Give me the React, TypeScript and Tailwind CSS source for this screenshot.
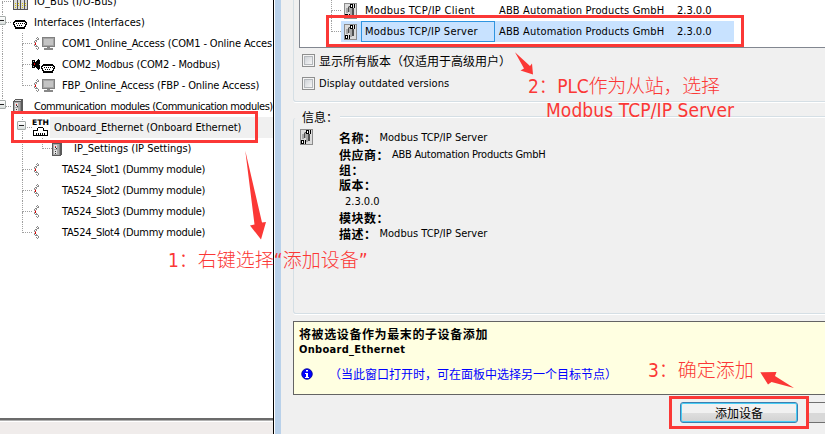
import type { ReactNode } from "react";
import { clsx } from "clsx";

const tahoma = "font-['DejaVu_Sans_Condensed','DejaVu_Sans','Noto_Sans_CJK_SC',sans-serif]";
const song = "font-['Noto_Sans_CJK_SC',sans-serif]";

function Elbow({ wide, last }: { wide: string; last?: boolean }) {
  return (
    <span className={clsx("flex shrink-0 flex-col", wide)}>
      <i className="h-[11px] border-b border-l border-dotted border-[#a0a0a0]" />
      <i className={clsx("h-[10px]", !last && "border-l border-dotted border-[#a0a0a0]")} />
    </span>
  );
}

function Toggle({ place }: { place: string }) {
  return (
    <span className={clsx("absolute flex size-[9px] items-center justify-center rounded-[1px] border border-[#a4aaa8] bg-gradient-to-b from-white to-[#d8dedc]", place)}>
      <i className="h-px w-[5px] bg-[#222]" />
    </span>
  );
}

function Port() {
  return (
    <svg width="14" height="9" viewBox="0 0 14 9" shapeRendering="crispEdges">
      <path d="M2 0h10v1h1v1h1v3h-1v2h-1v2H2V7H1V5H0V2h1V1h1z" fill="#000" />
      <path d="M2 2h10v1h1v1h-1v2h-1v1H3V6H2V4H1V3h1z" fill="#fff" />
      <path d="M3 3h1v1H3zM5 3h1v1H5zM7 3h1v1H7zM9 3h1v1H9zM11 3h1v1h-1zM4 5h1v1H4zM6 5h1v1H6zM8 5h1v1H8z" fill="#000" />
    </svg>
  );
}

function Link() {
  return (
    <svg className="shrink-0" width="6" height="13" viewBox="0 0 6 13" shapeRendering="crispEdges">
      <path d="M3 0h1v1H3zM4 1h1v1H4zM2 1h1v1H2zM3 2h2v1H3zM1 3h2v1H1zM0 4h1v1H0zM2 4h1v1H2zM0 8h1v1H0zM2 8h1v1H2zM1 9h2v1H1zM3 9h1v1H3zM2 11h1v1H2zM4 11h1v1H4zM3 12h1v1H3zM4 10h1v1H4z" fill="#8a8a8a" />
      <path d="M0 5h1v1H0zM0 7h1v1H0z" fill="#999" />
      <path d="M1 5h1v1H1z" fill="#c77" />
      <path d="M1 6h1v2H1z" fill="#d00" />
    </svg>
  );
}

function Monitor() {
  return (
    <svg className="shrink-0" width="13" height="13" viewBox="0 0 13 13" shapeRendering="crispEdges">
      <path d="M0 0h13v10H0z" fill="#808080" />
      <path d="M1 1h11v8H1z" fill="#a5a5a5" />
      <path d="M2 2h9v6H2z" fill="#c4c4c4" />
      <path d="M5 10h3v1H5zM2 11h9v2H2z" fill="#888" />
    </svg>
  );
}

function Plug() {
  return (
    <svg className="shrink-0" width="8" height="11" viewBox="0 0 8 11" shapeRendering="crispEdges">
      <path d="M0 1h3v8H0zM3 3h1v5H3zM4 2h1v7H4zM5 1h1v9H5zM6 0h1v11H6zM7 1h1v9H7z" fill="#000" />
      <path d="M1 2h1v1H1zM1 7h1v1H1zM7 5h1v1H7z" fill="#bbb" />
      <path d="M2 4h1v2H2z" fill="#e00" />
    </svg>
  );
}

function Rack() {
  return (
    <svg className="shrink-0" width="10" height="15" viewBox="0 0 10 15" shapeRendering="crispEdges">
      <path d="M0 2l2-2h8v13l-2 2H0z" fill="#5a5a5a" />
      <path d="M1 3h6v11H1z" fill="#aaa" />
      <path d="M2 1h6l-1 1H1z" fill="#ddd" />
      <path d="M7 3h1v11H7z" fill="#888" />
      <path d="M2 4h3v4H2zM2 9h3v4H2z" fill="#e4e4e4" />
      <path d="M3 6h1v1H3zM4 7h1v1H4zM3 10h1v1H3zM3 12h1v1H3z" fill="#333" />
      <path d="M3 5h1v1H3z" fill="#d22" />
    </svg>
  );
}

function Card() {
  return (
    <svg width="13" height="16" viewBox="0 0 13 16" shapeRendering="crispEdges">
      <path d="M0 0h13v16H0z" fill="#8c8c8c" />
      <path d="M1 1h11v14H1z" fill="#dcdcdc" />
      <path d="M2 5h2v5H2zM4 3h2v6H4zM6 5h2v8H6z" fill="#a8a8a8" />
      <path d="M4 4h1v5H4zM8 5h2v7H8zM5 3h2v1H5z" fill="#505050" />
      <path d="M6 1h3v1H6zM6 2h1v2H6zM8 2h1v2H8zM6 4h3v1H6zM10 1h1v4h-1zM1 11h3v1H1zM1 12h1v2H1zM3 12h1v2H3zM1 14h3v1H1zM5 11h1v4H5z" fill="#000" />
      <path d="M7 2h1v2H7zM2 12h1v2H2z" fill="#fff" />
    </svg>
  );
}

function Ethernet() {
  return (
    <svg className="shrink-0" width="18" height="18" viewBox="0 0 18 18" shapeRendering="crispEdges">
      <text x="0" y="6" fontSize="7.5" fontWeight="700" textLength="17" lengthAdjust="spacingAndGlyphs" fontFamily="DejaVu Sans">ETH</text>
      <path d="M6 8h5v1H6zM5 9h1v2H5zM11 9h1v2h-1zM2 11h4v1H2zM11 11h4v1h-4zM1 11h1v6H1zM15 11h1v6h-1zM1 16h15v1H1z" fill="#000" />
      <path d="M4 14h1v2H4zM6 14h1v2H6zM8 14h1v2H8zM10 14h1v2h-1zM12 14h1v2h-1z" fill="#000" />
    </svg>
  );
}

function RootRow({ icon, toggle, last, label, track }: { icon: ReactNode; toggle?: boolean; last?: boolean; label: string; track?: string }) {
  return (
    <div className="relative flex h-[21px] items-center pl-[2px]">
      <Elbow wide="w-[9px]" last={last} />
      {toggle && <Toggle place="-left-[3px] top-[4px]" />}
      <span className="flex w-[22px] shrink-0 items-center pl-[2px]">{icon}</span>
      <span className={clsx("pl-px", track)}>{label}</span>
    </div>
  );
}

function ChildRow({ icon, last, rail, label, track }: { icon: ReactNode; last?: boolean; rail?: boolean; label: string; track?: string }) {
  return (
    <div className="flex h-[21px] items-center pl-[2px]">
      <span className={clsx("h-full w-[20px] shrink-0", rail && "border-l border-dotted border-[#a0a0a0]")} />
      <Elbow wide="w-[10px]" last={last} />
      <span className="flex w-[30px] shrink-0 items-center">{icon}</span>
      <span className={track}>{label}</span>
    </div>
  );
}

const online = (
  <span className="flex items-center gap-[2px] pl-[2px]">
    <Link />
    <Monitor />
  </span>
);
const slot = (
  <span className="pl-[2px]">
    <Link />
  </span>
);

function DeviceTree() {
  return (
    <div className="h-[418px] overflow-hidden bg-white">
      <div className="-mt-[9px]">
        <RootRow
          label="IO_Bus (I/O-Bus)"
          track="pt-px tracking-[0.15px]"
          icon={
            <svg width="15" height="16" viewBox="0 0 15 16" shapeRendering="crispEdges">
              <path d="M0 0h15v16H0z" fill="#555" />
              <path d="M1 1h3v14H1zM5 1h2v14H5zM8 1h3v14H8zM12 1h2v14h-2z" fill="#d8d8d8" />
              <path d="M2 9h1v1H2zM5 9h1v1H5zM9 9h1v1H9zM12 9h1v1h-1zM2 11h1v1H2zM5 11h1v1H5zM9 11h1v1H9zM12 11h1v1h-1zM2 13h1v1H2zM9 13h1v1H9z" fill="#d8c400" />
            </svg>
          }
        />
        <RootRow toggle label="Interfaces (Interfaces)" track="pt-px tracking-[0.05px]" icon={<span className="pt-[4px]"><Port /></span>} />
        <ChildRow rail icon={online} label="COM1_Online_Access (COM1 - Online Acces" track="pt-px tracking-[-0.14px]" />
        <ChildRow
          rail
          label="COM2_Modbus (COM2 - Modbus)"
          track="pt-px tracking-[-0.15px]"
          icon={
            <span className="flex items-center gap-px">
              <Plug />
              <span className="pt-[7px]"><Port /></span>
            </span>
          }
        />
        <ChildRow rail last icon={online} label="FBP_Online_Access (FBP - Online Access)" track="pt-px tracking-[-0.13px]" />
        <RootRow toggle last label="Communication_modules (Communication modules)" track="pt-px tracking-[-0.46px]" icon={<Rack />} />
        <div className="relative flex h-[21px] items-center pl-[22px]">
          <Elbow wide="w-[10px]" />
          <Toggle place="left-[17px] top-[4px]" />
          <Ethernet />
          <span className="h-full grow bg-[#f0f0f0] pl-[4px] leading-[21px] tracking-[-0.06px]">Onboard_Ethernet (Onboard Ethernet)</span>
        </div>
        <div className="flex h-[21px] items-center pl-[22px]">
          <span className="h-full w-[20px] shrink-0 border-l border-dotted border-[#a0a0a0]" />
          <Elbow wide="w-[10px]" last />
          <Rack />
          <span className="pt-px pl-[12px] tracking-[-0.02px]">IP_Settings (IP Settings)</span>
        </div>
        <ChildRow icon={slot} label="TA524_Slot1 (Dummy module)" track="pt-px tracking-[-0.31px]" />
        <ChildRow icon={slot} label="TA524_Slot2 (Dummy module)" track="pt-px tracking-[-0.31px]" />
        <ChildRow icon={slot} label="TA524_Slot3 (Dummy module)" track="pt-px tracking-[-0.31px]" />
        <ChildRow icon={slot} last label="TA524_Slot4 (Dummy module)" track="pt-px tracking-[-0.31px]" />
      </div>
    </div>
  );
}

function DeviceRow({ name, selected, track }: { name: string; selected?: boolean; track: string }) {
  return (
    <div className="flex h-[21px] items-center pl-[31px]">
      <Elbow wide="w-[10px]" last={selected} />
      <div className={clsx("flex h-full w-[393px] items-center", selected && "bg-[#c8e2ff]")}>
        <span className="w-[20px] shrink-0 pl-[3px]"><Card /></span>
        <span className={clsx("h-full w-[134px] shrink-0 border pl-[3px] leading-[19px]", track, selected ? "border-[#2f94e0]" : "border-transparent")}>{name}</span>
        <span className="w-[178px] shrink-0 pt-px pl-[4px] tracking-[0.15px]">ABB Automation Products GmbH</span>
        <span className="pt-px pl-[4px]">2.3.0.0</span>
      </div>
    </div>
  );
}

function Check({ children }: { children: ReactNode }) {
  return (
    <label className="flex h-[23px] items-center gap-[4px]">
      <i className="flex size-[13px] items-center justify-center border border-[#8e8f8f] bg-[#f4f4f4]">
        <i className="size-[9px] border border-[#b4b8bc] bg-gradient-to-br from-[#cfd3d8] to-[#f6f6f6]" />
      </i>
      {children}
    </label>
  );
}

function Info({ name, value, tall, gap }: { name: string; value?: string; tall: string; gap?: string }) {
  return (
    <div className={clsx("flex items-center", tall)}>
      <b className={clsx("text-[12px] leading-[14px] tracking-[0.5px]", song)}>{name}</b>
      {value && <span className={clsx("pt-px leading-[14px]", gap)}>{value}</span>}
    </div>
  );
}

export default function App() {
  return (
    <div className={clsx("relative flex h-[434px] w-[825px] overflow-hidden bg-[#f0f0f0] text-[11px] whitespace-nowrap text-black", tahoma)}>
      <aside className="w-[273px] shrink-0 overflow-hidden bg-[#f0eceb]">
        <DeviceTree />
        <div className="h-[4px] border-t-2 border-b border-t-[#6b6b6b] border-b-white bg-[#b0b0b0]" />
      </aside>
      <div className="w-[8px] shrink-0 border-l border-l-black bg-[#b9d1ea]">
        <div className="h-full w-px bg-white" />
      </div>

      <main className="w-[544px] shrink-0 pl-[12px]">
        <section className="h-[102px] rounded-bl-[3px] border-b border-l border-[#d5dfe5] pl-[5px] shadow-[0_1px_0_#fff]">
          <div className="h-[48px] overflow-hidden border-b border-l border-[#828790] bg-white">
            <DeviceRow name="Modbus TCP/IP Client" track="tracking-[0.3px]" />
            <DeviceRow name="Modbus TCP/IP Server" track="tracking-[0.25px]" selected />
          </div>
          <div className="pt-[1px] pl-[3px]">
            <Check><span className={clsx("text-[12px]", song)}>显示所有版本（仅适用于高级用户）</span></Check>
            <Check><span className="pt-px tracking-[0.05px]">Display outdated versions</span></Check>
          </div>
        </section>

        <section className="mt-[5px] h-[207px]">
          <div className="flex h-[19px] items-center">
            <span className={clsx("ml-[9px] w-[38px] text-[12px]", song)}>信息：</span>
            <i className="h-[2px] grow border-t border-[#d5dfe5] bg-white" />
          </div>
          <div className="-mt-[8px] flex h-[196px] rounded-l-[3px] border-b border-l border-[#d5dfe5] pt-[11px] pl-[6px] shadow-[0_1px_0_#fff]">
            <span><Card /></span>
            <div className="pl-[26px]">
              <Info tall="h-[17px]" name="名称：" value="Modbus TCP/IP Server" gap="pl-[3px]" />
              <Info tall="h-[17px]" name="供应商：" value="ABB Automation Products GmbH" gap="pl-[3px] tracking-[-0.28px]" />
              <Info tall="h-[14px]" name="组：" />
              <Info tall="h-[16px]" name="版本：" />
              <div className="h-[17px] pl-[6px] leading-[17px]">2.3.0.0</div>
              <Info tall="h-[15px]" name="模块数：" />
              <Info tall="h-[17px]" name="描述：" value="Modbus TCP/IP Server" gap="pl-[3px]" />
            </div>
          </div>
        </section>

        <section className="mt-[7px] h-[74px] border border-r-0 border-[#646464] bg-[#ffffe1] pt-[4px] pl-[5px]">
          <b className={clsx("block h-[16px] text-[12px] leading-[16px] tracking-[0.6px]", song)}>将被选设备作为最末的子设备添加</b>
          <b className="block h-[16px] leading-[16px] tracking-[0.3px]">Onboard_Ethernet</b>
          <div className="flex h-[32px] items-center text-[#00f]">
            <svg className="ml-[2px]" width="12" height="12" viewBox="0 0 12 12">
              <circle cx="6" cy="6" r="5.3" fill="#00f" stroke="#00008b" strokeWidth=".8" />
              <path d="M5 2h2v1.6H5zM4 5h3v4h1v1H4V9h1V6H4z" fill="#fff" />
            </svg>
            <span className={clsx("pl-[16px] text-[12px]", song)}>（当此窗口打开时，可在面板中选择另一个目标节点）</span>
          </div>
        </section>

        <footer className="mt-[7px] flex h-[21px] gap-[8px] pl-[387px]">
          <button className={clsx("w-[118px] rounded-[3px] border border-[#3c7fb1] bg-gradient-to-b from-[#f1f1f1] from-50% via-[#dfdfdf] via-50% to-[#d2d2d2] text-[12px] leading-[17px] shadow-[inset_0_0_0_1px_#48cdf5]", song)}>
            添加设备
          </button>
          <span className="grow border border-r-0 border-[#707070] bg-gradient-to-b from-[#f1f1f1] from-50% to-[#d8d8d8] to-50%" />
        </footer>
      </main>

      <div className="pointer-events-none absolute inset-0 text-[19px] text-[#fb3836]">
        <div className="absolute top-[111px] left-[11px] h-[32px] w-[247px] border-3 border-current" />
        <div className="absolute top-[15px] left-[326px] h-[32px] w-[418px] border-3 border-current" />
        <div className="absolute top-[396px] left-[669px] h-[33px] w-[140px] border-3 border-current" />
        <svg className="absolute inset-0" width="825" height="434" viewBox="0 0 825 434" fill="currentColor">
          <path d="M245.3 150.7L262 222.5L266 222L261 239.5L250 225.5L254.5 224.5Z" />
          <path d="M515 52.3L530 66L532 63.5L533 74.5L520.5 70.5L524 68.5Z" />
          <path d="M760.3 372.3L776.5 372L775 376L794 388L771.5 382L768 384.5Z" />
        </svg>
        <p className="absolute top-[248px] left-[168px] leading-[24px] font-light">1：右键选择“添加设备”</p>
        <p className="absolute top-[74px] left-[528px] leading-[24px] font-light tracking-[-0.25px]">2：PLC作为从站，选择</p>
        <p className="absolute top-[98px] left-[546px] leading-[24px] tracking-[0.1px]">Modbus TCP/IP Server</p>
        <p className="absolute top-[358px] left-[648px] leading-[24px] font-light">3：确定添加</p>
      </div>
    </div>
  );
}
